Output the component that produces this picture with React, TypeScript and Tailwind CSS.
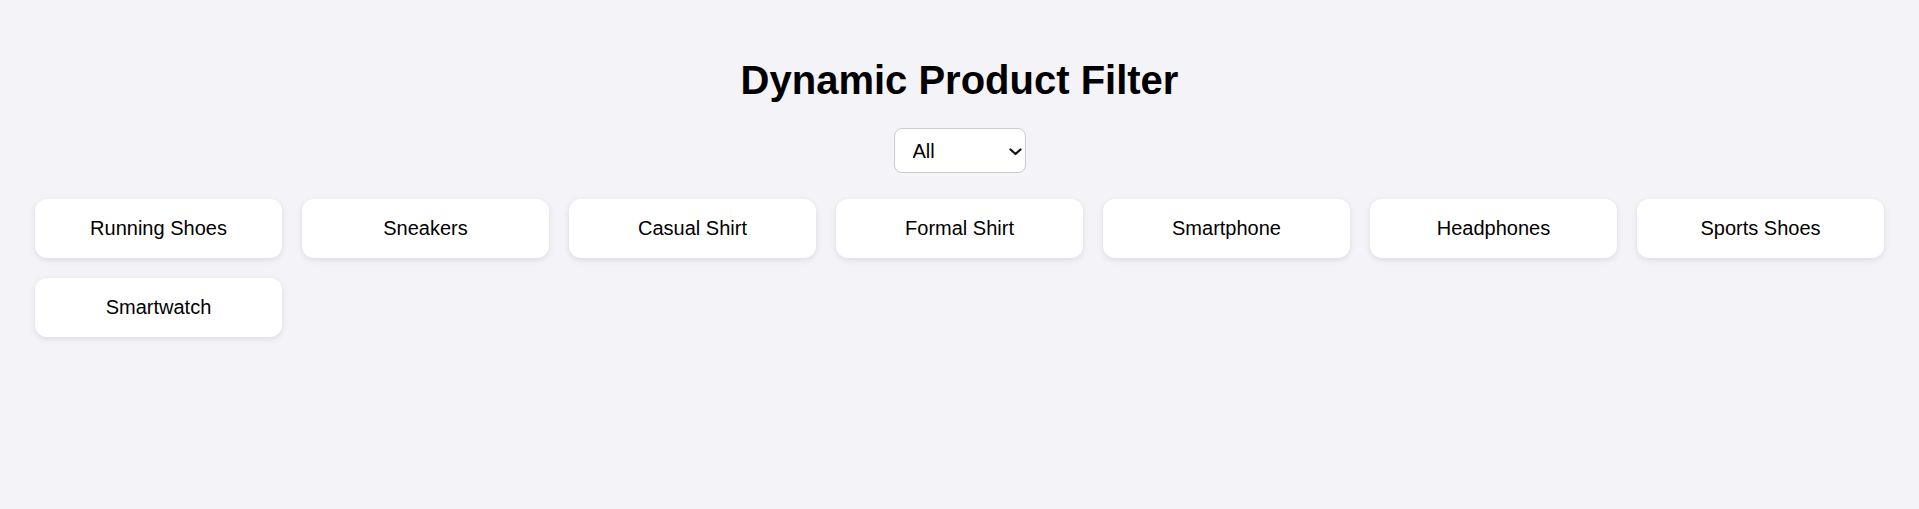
import { useState } from 'react';

type Product = { id: number; name: string; category: string };

const products: Product[] = [
  { id: 1, name: 'Running Shoes', category: 'Shoes' },
  { id: 2, name: 'Sneakers', category: 'Shoes' },
  { id: 3, name: 'Casual Shirt', category: 'Clothing' },
  { id: 4, name: 'Formal Shirt', category: 'Clothing' },
  { id: 5, name: 'Smartphone', category: 'Electronics' },
  { id: 6, name: 'Headphones', category: 'Electronics' },
  { id: 7, name: 'Sports Shoes', category: 'Shoes' },
  { id: 8, name: 'Smartwatch', category: 'Electronics' },
];

const categories = ['All', 'Shoes', 'Clothing', 'Electronics'];

function ProductCard({ product }: { product: Product }) {
  return (
    <div className="bg-white rounded-[12px] py-[18px] text-center text-[20px] leading-[23px] text-black shadow-[0_2px_6px_rgba(0,0,0,0.1)]">
      {product.name}
    </div>
  );
}

export default function App() {
  const [category, setCategory] = useState('All');
  const visible = category === 'All' ? products : products.filter(p => p.category === category);

  return (
    <div className="min-h-[509px] bg-[#f4f4f8] pt-[57px] pb-10 font-['Liberation_Sans',Arial,sans-serif]">
      <h1 className="text-center text-[40px] leading-[46px] font-bold text-black">
        Dynamic Product Filter
      </h1>

      <div className="flex justify-center mt-[25px] mb-[26px]">
        <div className="relative">
          <select
            value={category}
            onChange={e => setCategory(e.target.value)}
            className="appearance-none w-[132px] h-[45px] pl-[18px] pr-8 text-[20px] text-black bg-white border border-[#cccccc] rounded-[8px] outline-none"
          >
            {categories.map(c => (
              <option key={c} value={c}>{c}</option>
            ))}
          </select>
          <svg
            className="pointer-events-none absolute left-[115px] top-[20px]"
            width="13"
            height="8"
            viewBox="0 0 13 8"
          >
            <polyline points="1.5,1.5 6.5,6 11.5,1.5" fill="none" stroke="#111" strokeWidth="2.2" strokeLinecap="round" strokeLinejoin="round" />
          </svg>
        </div>
      </div>

      <div className="grid grid-cols-7 gap-5 px-[35px]">
        {visible.map(p => (
          <ProductCard key={p.id} product={p} />
        ))}
      </div>
    </div>
  );
}
